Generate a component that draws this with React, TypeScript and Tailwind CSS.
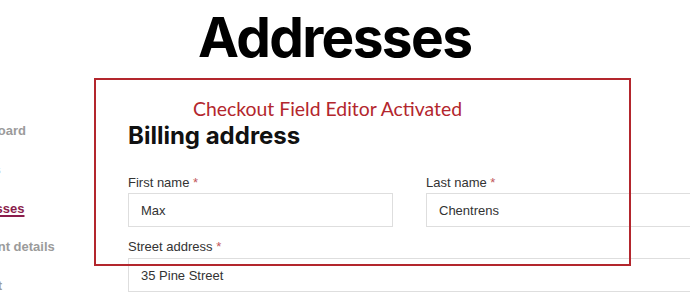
import React from "react"

const navItems = [
  { label: "Dashboard", active: false },
  { label: "Orders", active: false },
  { label: "Addresses", active: true },
  { label: "Account details", active: false },
  { label: "Logout", active: false },
]

function Field({ label, value, className = "" }: { label: string; value: string; className?: string }) {
  return (
    <div className={className}>
      <label className="block text-[13px] leading-[18px] text-[#333]">
        {label} <span className="text-[#c2575c]">*</span>
      </label>
      <div className="mt-[1px] h-[34px] border border-[#dedede] bg-white pl-3 flex items-center text-[13px] leading-[15px] text-[#333]">
        {value}
      </div>
    </div>
  )
}

export default function App() {
  return (
    <div className="relative w-[690px] h-[301px] overflow-hidden bg-white" style={{ fontFamily: '"Liberation Sans", Arial, sans-serif' }}>
      <div className="flex">
        {/* Sidebar */}
        <nav className="ml-[-42px] w-[170px] shrink-0 pt-[112px]">
          {navItems.map((item) => (
            <div
              key={item.label}
              className={`text-[13px] font-bold leading-[38.75px] whitespace-nowrap ${
                item.active ? "text-[#8a1d4c] underline decoration-[1.5px] underline-offset-2" : "text-[#9b9b9b]"
              }`}
            >
              {item.label}
            </div>
          ))}
        </nav>

        {/* Content */}
        <main className="w-[563px] shrink-0">
          <h1 className="mt-[10px] pl-[70px] text-[55px] leading-[55px] font-bold tracking-[-0.03em] text-black whitespace-nowrap" style={{ fontFamily: "Inter, sans-serif" }}>
            Addresses
          </h1>
          <h2 className="mt-[56px] text-[24px] leading-[30px] font-bold text-[#111]" style={{ fontFamily: "Inter, sans-serif" }}>
            Billing address
          </h2>
          <div className="mt-[23px] grid grid-cols-2 gap-x-[33px]">
            <Field label="First name" value="Max" />
            <Field label="Last name" value="Chentrens" />
          </div>
          <div className="mt-[11px]">
            <label className="block text-[13px] leading-[18px] text-[#333]">
              Street address <span className="text-[#c2575c]">*</span>
            </label>
            <div className="mt-[2px] h-[34px] border border-[#dedede] bg-white pl-3 flex items-center text-[13px] leading-[15px] text-[#333]">
              35 Pine Street
            </div>
          </div>
        </main>
      </div>

      {/* Annotation overlay */}
      <div className="absolute left-[94px] top-[78px] w-[537px] h-[188px] border-2 border-[#b3262d] pointer-events-none">
        <div className="pt-[18px] pl-[97px] text-[19.4px] leading-[22px] text-[#b3262d] whitespace-nowrap" style={{ fontFamily: "Lato, sans-serif" }}>
          Checkout Field Editor Activated
        </div>
      </div>
    </div>
  )
}
